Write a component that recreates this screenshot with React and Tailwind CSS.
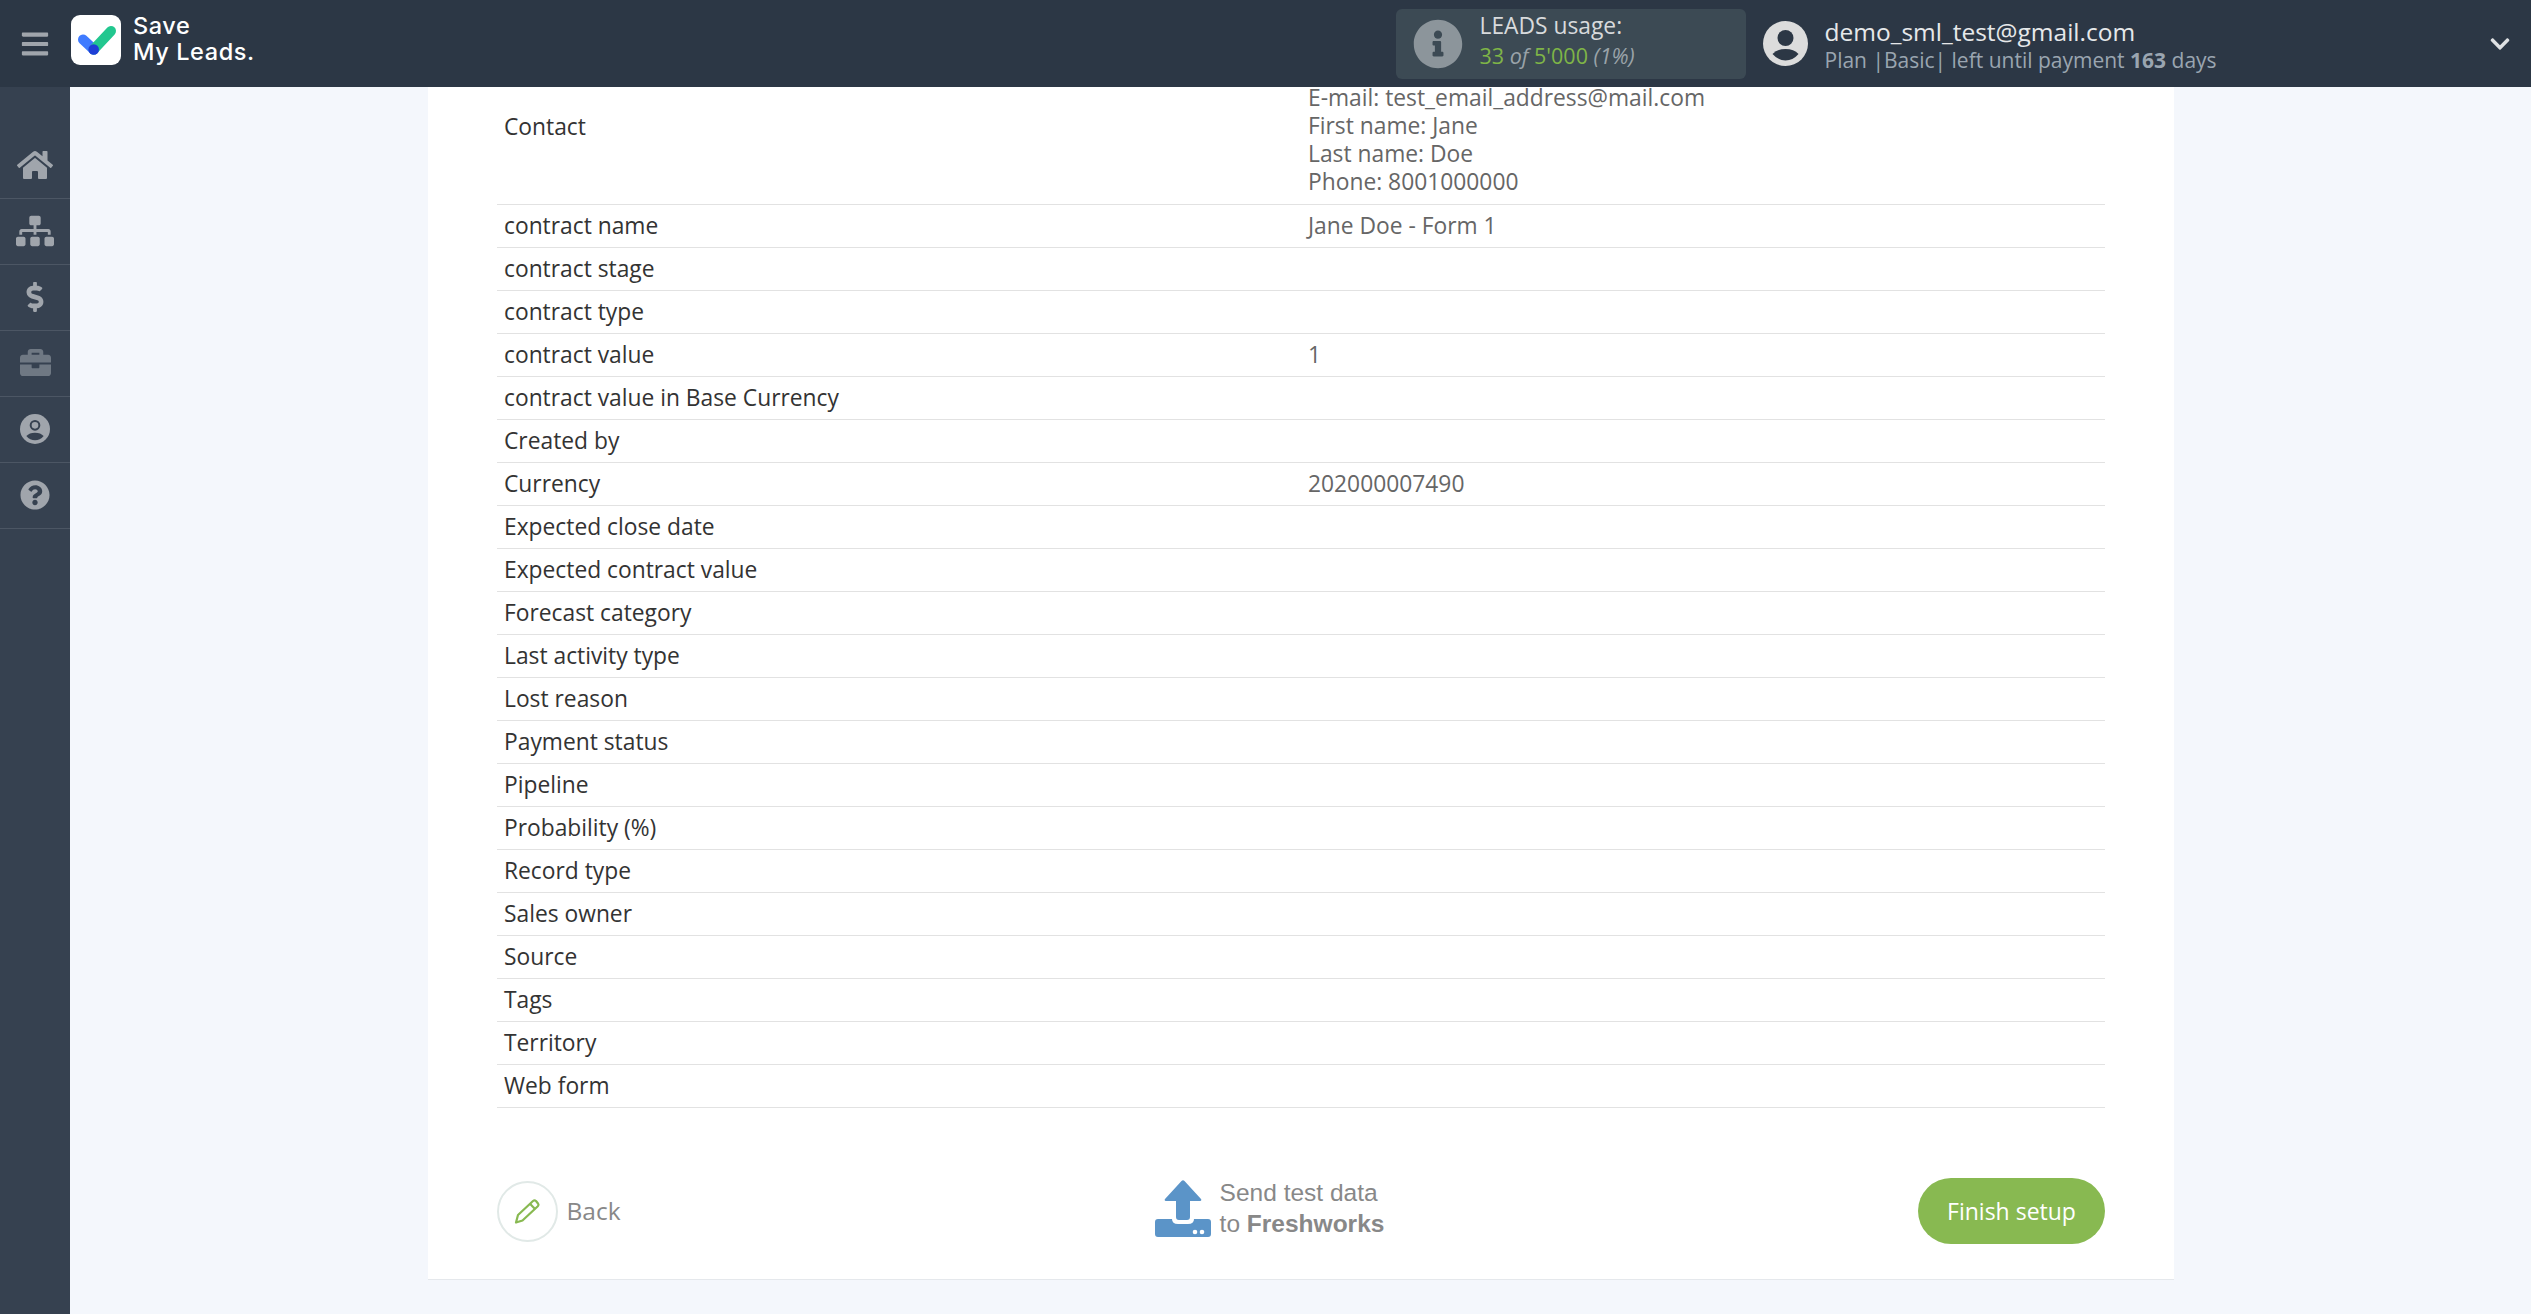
import React from "react";
import {
  FaBars,
  FaBriefcase,
  FaChevronDown,
  FaDollarSign,
  FaHome,
  FaInfoCircle,
  FaQuestionCircle,
  FaSitemap,
} from "react-icons/fa";

const rows = [
  ["contract name", "Jane Doe - Form 1"],
  ["contract stage", ""],
  ["contract type", ""],
  ["contract value", "1"],
  ["contract value in Base Currency", ""],
  ["Created by", ""],
  ["Currency", "202000007490"],
  ["Expected close date", ""],
  ["Expected contract value", ""],
  ["Forecast category", ""],
  ["Last activity type", ""],
  ["Lost reason", ""],
  ["Payment status", ""],
  ["Pipeline", ""],
  ["Probability (%)", ""],
  ["Record type", ""],
  ["Sales owner", ""],
  ["Source", ""],
  ["Tags", ""],
  ["Territory", ""],
  ["Web form", ""],
];

const contact = [
  "E-mail: test_email_address@mail.com",
  "First name: Jane",
  "Last name: Doe",
  "Phone: 8001000000",
];

// head and shoulders cut out of a disc, as in the reference
function UserDisc({ size, color, cut, ring }) {
  return (
    <svg width={size} height={size} viewBox="0 0 45 45">
      <circle cx="22.5" cy="22.5" r="22.5" fill={color} />
      <circle cx="22.5" cy="17" r={ring ? 6.5 : 8} fill={ring ? color : cut} stroke={cut} strokeWidth={ring ? 3 : 0} />
      <path d="M9.5 33 Q14 28 22.5 28 Q31 28 35.5 33 Q30 39.5 22.5 39.5 Q15 39.5 9.5 33 Z" fill={cut} />
    </svg>
  );
}

function SidebarUser() {
  return <UserDisc size={30} color="#a0a5ac" cut="#364150" ring />;
}

const navItems = [
  { icon: FaHome, size: 36, color: "text-[#a0a5ac]" },
  { icon: FaSitemap, size: 38, color: "text-[#a0a5ac]" },
  { icon: FaDollarSign, size: 30, color: "text-[#a0a5ac]" },
  { icon: FaBriefcase, size: 31, color: "text-[#6f7883]" },
  { icon: SidebarUser, size: 30, color: "" },
  { icon: FaQuestionCircle, size: 30, color: "text-[#a0a5ac]" },
];

function Logo() {
  return (
    <div className="w-[50px] h-[50px] mb-[7px] rounded-[9px] bg-white">
      <svg width="50" height="50" viewBox="0 0 50 50">
        <path d="M12 24.5 L22.7 34.5" stroke="#3f7bff" strokeWidth="10" strokeLinecap="round" />
        <path d="M22.7 34.5 L40 16" stroke="#22c78f" strokeWidth="10" strokeLinecap="round" />
        <circle cx="22.7" cy="34.5" r="5.3" fill="#1f3fd6" />
      </svg>
    </div>
  );
}

function SendIcon() {
  return (
    <svg width="56" height="57" viewBox="0 0 56 57">
      <path
        d="M26.5 1 Q28 -0.5 29.5 1 L46 19 Q47 21 45 21 L35 21 L35 37 Q35 40 32 40 L24 40 Q21 40 21 37 L21 21 L11 21 Q9 21 10 19 Z"
        fill="#5b94c8"
      />
      <path
        d="M3 39 L17 39 L17 39 Q17 44 23 44 L33 44 Q39 44 39 39 L53 39 Q56 39 56 42 L56 54 Q56 57 53 57 L3 57 Q0 57 0 54 L0 42 Q0 39 3 39 Z"
        fill="#5b94c8"
      />
      <circle cx="40" cy="52" r="2.3" fill="#fff" />
      <circle cx="47" cy="52" r="2.3" fill="#fff" />
    </svg>
  );
}

function PencilIcon() {
  return (
    <svg width="26" height="26" viewBox="0 0 26 26" fill="none" stroke="#88b951" strokeWidth="2.2" strokeLinejoin="round">
      <path d="M2 24.5 L4 17 L19 3 Q20.5 1.8 22 3 L24 5.5 Q25 7 23.8 8.2 L8.5 22.5 Z" />
      <path d="M16 5.8 L21 11" />
    </svg>
  );
}

export default function App() {
  return (
    <div className="h-screen flex flex-col overflow-hidden bg-[#f4f7fc] font-['Open_Sans',sans-serif]">
      {/* Header */}
      <header className="h-[87px] shrink-0 bg-[#2c3745] flex items-center">
        <div className="w-[71px] pr-[1px] flex justify-center">
          <FaBars className="text-[#a0a5ac]" size={30} />
        </div>
        <Logo />
        <div className="ml-[12px] mb-[9px] text-white font-['Inter',sans-serif] font-medium text-[23.5px] leading-[26px] tracking-[0.6px]">
          <div>Save</div>
          <div>My Leads.</div>
        </div>

        <div className="ml-auto w-[350px] h-[70px] bg-[#3c4a54] rounded-[6px] flex items-center pl-[17px]">
          <FaInfoCircle className="text-[#8c959b]" size={50} />
          <div className="ml-[17px] pb-[6px] text-[22.8px] leading-[30px]">
            <div className="text-[#d8dadc]">LEADS usage:</div>
            <div className="text-[21.5px] text-[#7fb547]">
              33 <i className="text-[#9aa3a9]">of</i> 5'000 <i className="text-[#9aa3a9]">(1%)</i>
            </div>
          </div>
        </div>

        <div className="ml-[17px] flex">
          <UserDisc size={45} color="#dcdcdc" cut="#2c3745" />
        </div>
        <div className="ml-[17px] w-[664px]">
          <div className="text-[24.5px] leading-[31px] pt-[2px] text-[#e6e8ea]">demo_sml_test@gmail.com</div>
          <div className="text-[21px] leading-[27px] text-[#9aa5b0]">
            Plan |Basic| left until payment <b>163</b> days
          </div>
        </div>
        <div className="w-[42.5px] shrink-0 flex">
          <FaChevronDown className="text-[#dfe1e3]" size={22} />
        </div>
      </header>

      <div className="flex-1 flex min-h-0">
        {/* Sidebar */}
        <aside className="w-[70px] shrink-0 bg-[#364150] pt-[46px]">
          {navItems.map((item, i) => (
            <div key={i} className="h-[66px] pb-[2px] flex items-center justify-center border-b border-[#4c5664]">
              <item.icon className={item.color} size={item.size} />
            </div>
          ))}
        </aside>

        {/* Content scrolled to the bottom */}
        <main className="flex-1 min-w-0 overflow-hidden flex flex-col justify-end items-center pb-[34px]">
          <div className="w-[1746px] shrink-0 bg-white border-b border-[#e5e8ec] px-[69px] pb-[35px]">
            <table className="w-full table-fixed text-[22.8px] leading-[28px]">
              <tbody>
                <tr className="border-b border-[#e2e2e2]">
                  <td className="pl-[7.5px] pb-[34px] text-[#333]">Contact</td>
                  <td className="pl-[7.5px] pb-[8px] text-[#666]">
                    {contact.map((line) => (
                      <div key={line}>{line}</div>
                    ))}
                  </td>
                </tr>
                {rows.map(([name, value]) => (
                  <tr key={name} className="h-[43px] border-b border-[#e2e2e2]">
                    <td className="pl-[7.5px] pb-[1px] text-[#333]">{name}</td>
                    <td className="pl-[7.5px] pb-[1px] text-[#666]">{value}</td>
                  </tr>
                ))}
              </tbody>
            </table>

            <div className="mt-[70px] h-[66px] flex items-center justify-between">
              <div className="flex items-center w-[187px]">
                <div className="w-[61px] h-[61px] rounded-full border-2 border-[#e1e9e7] flex items-center justify-center">
                  <PencilIcon />
                </div>
                <span className="ml-[9px] text-[24.5px] text-[#888]">Back</span>
              </div>

              <div className="flex items-center mr-[62px] mb-[6px]">
                <SendIcon />
                <div className="ml-[9px] font-['Liberation_Sans',sans-serif] text-[24.5px] leading-[31px] text-[#888]">
                  <div>Send test data</div>
                  <div>
                    to <b>Freshworks</b>
                  </div>
                </div>
              </div>

              <button className="w-[187px] h-[66px] pl-[1px] rounded-full bg-[#88b951] text-white text-[23px]">
                Finish setup
              </button>
            </div>
          </div>
        </main>
      </div>
    </div>
  );
}
